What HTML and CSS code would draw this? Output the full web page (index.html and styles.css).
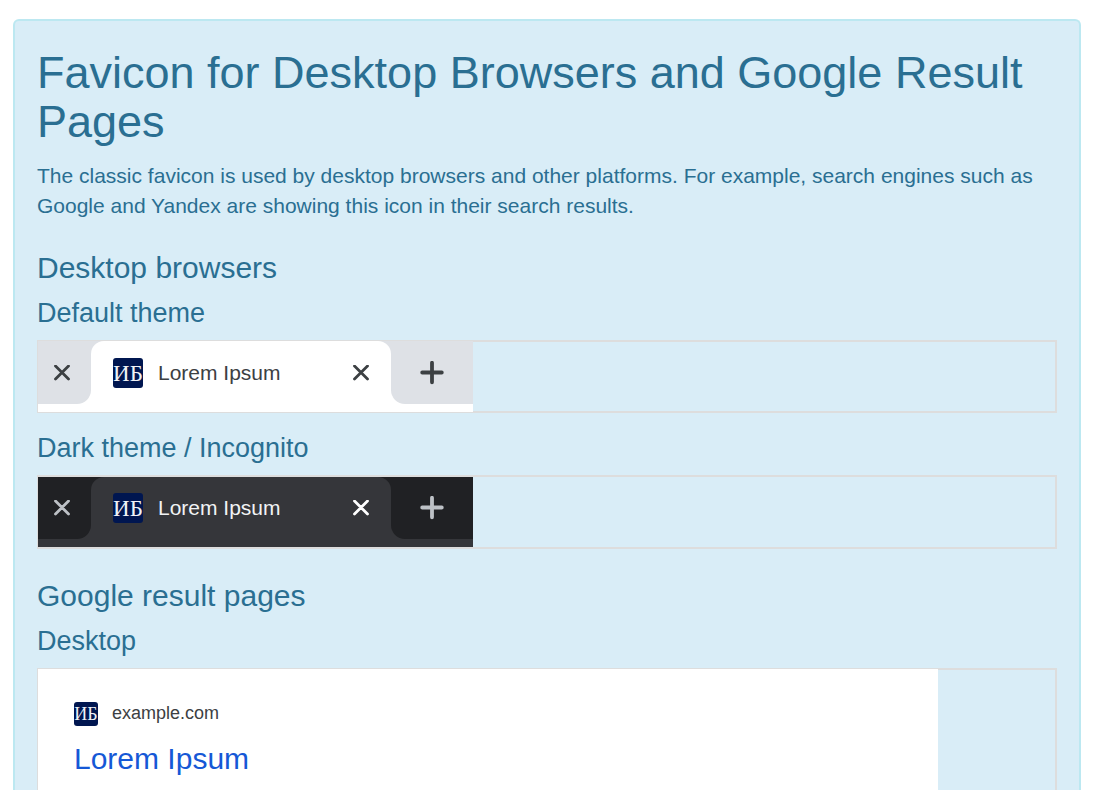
FILE: index.html
```html
<!DOCTYPE html>
<html lang="en">
<head>
<meta charset="utf-8">
<title>Favicon for Desktop Browsers and Google Result Pages</title>
<link rel="stylesheet" href="styles.css">
</head>
<body>
<svg class="defs" aria-hidden="true">
  <symbol id="close" viewBox="0 0 16 16"><path d="M1.5 1l13 13M14.5 1l-13 13" fill="none" stroke="currentColor" stroke-width="2.8" stroke-linecap="round"/></symbol>
  <symbol id="plus" viewBox="0 0 24 24"><path d="M12 1.7v19.6M2.2 11.5h19.6" fill="none" stroke="currentColor" stroke-width="3.8" stroke-linecap="round"/></symbol>
</svg>
<main class="panel">
  <h1 class="title">Favicon for Desktop Browsers and Google Result Pages</h1>
  <p class="intro">The classic favicon is used by desktop browsers and other platforms. For example, search engines such as Google and Yandex are showing this icon in their search results.</p>

  <h2 class="section">Desktop browsers</h2>
  <h3 class="variant">Default theme</h3>
  <div class="frame">
    <div class="strip light">
      <div class="side"><div class="side-tab side-left"><button class="icon-button" aria-label="Close previous tab"><svg class="close-icon"><use href="#close"/></svg></button></div></div>
      <div class="active-tab">
        <span class="favicon">ИБ</span>
        <span class="tab-name">Lorem Ipsum</span>
        <button class="icon-button" aria-label="Close tab"><svg class="close-icon"><use href="#close"/></svg></button>
      </div>
      <div class="side side-wide"><div class="side-tab side-right"><button class="icon-button" aria-label="New tab"><svg class="plus-icon"><use href="#plus"/></svg></button></div></div>
    </div>
  </div>

  <h3 class="variant variant-next">Dark theme / Incognito</h3>
  <div class="frame frame-dark">
    <div class="strip dark">
      <div class="side"><div class="side-tab side-left"><button class="icon-button" aria-label="Close previous tab"><svg class="close-icon"><use href="#close"/></svg></button></div></div>
      <div class="active-tab">
        <span class="favicon">ИБ</span>
        <span class="tab-name">Lorem Ipsum</span>
        <button class="icon-button" aria-label="Close tab"><svg class="close-icon"><use href="#close"/></svg></button>
      </div>
      <div class="side side-wide"><div class="side-tab side-right"><button class="icon-button" aria-label="New tab"><svg class="plus-icon"><use href="#plus"/></svg></button></div></div>
    </div>
  </div>

  <h2 class="section">Google result pages</h2>
  <h3 class="variant">Desktop</h3>
  <div class="frame">
    <div class="result">
      <div class="site"><span class="favicon favicon-small">ИБ</span><span>example.com</span></div>
      <a class="result-link" href="#">Lorem Ipsum</a>
    </div>
  </div>
</main>
</body>
</html>
```
FILE: styles.css
```css
* { box-sizing: border-box; }
body {
  margin: 0;
  padding: 19px 17px 0 13px;
  background: #fff;
  font-family: "Liberation Sans", Arial, sans-serif;
}
.defs { position: absolute; width: 0; height: 0; }
.panel {
  padding: 27px 22px 0;
  border: 2px solid #bce8f1;
  border-bottom: 0;
  border-radius: 6px 6px 0 0;
  background: #d9edf7;
  color: #2a6f92;
}
.title { margin: 0 0 15px; font-size: 45px; line-height: 49px; font-weight: 400; }
.intro { margin: 0; font-size: 21px; line-height: 30px; }
.section { margin: 30px 0 14px; font-size: 30px; line-height: 33px; font-weight: 400; }
.variant { margin: 0 0 12px; font-size: 27px; line-height: 30px; font-weight: 400; }
.variant-next { margin-top: 20px; }
.frame { border: 1px solid #ddd; box-shadow: inset 0 0 0 1px #ddd; }
.frame:last-child { border-bottom: 0; box-shadow: inset -1px 1px 0 #ddd; }
.frame-dark { padding: 1px 0; }
.strip {
  display: flex;
  width: 435px;
  max-width: 100%;
  background: var(--bar);
  border-bottom: 8px solid var(--tab);
}
.light { --bar: #dee1e6; --tab: #fff; --icon: #3c4043; --muted: #3c4043; --text: #3c4043; --height: 63px; }
.dark { --bar: #202124; --tab: #35363a; --icon: #fff; --muted: #bdc1c6; --text: #f1f3f4; --height: 62px; }
.side { flex: 0 0 53px; background: var(--tab); }
.side-wide { flex: 1 1 82px; }
.side-tab {
  display: flex;
  align-items: center;
  height: 100%;
  background: var(--bar);
  color: var(--muted);
}
.side-left { padding-left: 16px; border-bottom-right-radius: 14px; }
.side-right { justify-content: center; border-bottom-left-radius: 14px; }
.active-tab {
  flex: 0 1 300px;
  display: flex;
  align-items: center;
  gap: 15px;
  height: var(--height);
  padding: 0 22px;
  border-radius: 13px 13px 0 0;
  background: var(--tab);
  color: var(--icon);
}
.tab-name { flex: 1; font-size: 21px; line-height: 30px; color: var(--text); }
.icon-button { display: flex; padding: 0; border: 0; background: none; color: inherit; }
.close-icon { width: 16px; height: 16px; }
.plus-icon { width: 24px; height: 24px; }
.favicon {
  flex: none;
  display: flex;
  justify-content: center;
  width: 30px;
  height: 30px;
  border-radius: 3px;
  background: #001650;
  color: #f0f2f6;
  font-family: "Liberation Serif", "Times New Roman", serif;
  font-size: 23px;
  line-height: 31px;
}
.favicon-small { width: 24px; height: 24px; font-size: 18px; line-height: 25px; }
.result {
  width: 900px;
  max-width: 100%;
  padding: 32px 36px 16px;
  background: #fff;
}
.site { display: flex; align-items: center; gap: 14px; font-size: 18px; line-height: 25px; color: #3c4043; }
.result-link {
  display: block;
  margin-top: 15px;
  font-size: 30px;
  line-height: 36px;
  color: #1558d6;
  text-decoration: none;
}
```
